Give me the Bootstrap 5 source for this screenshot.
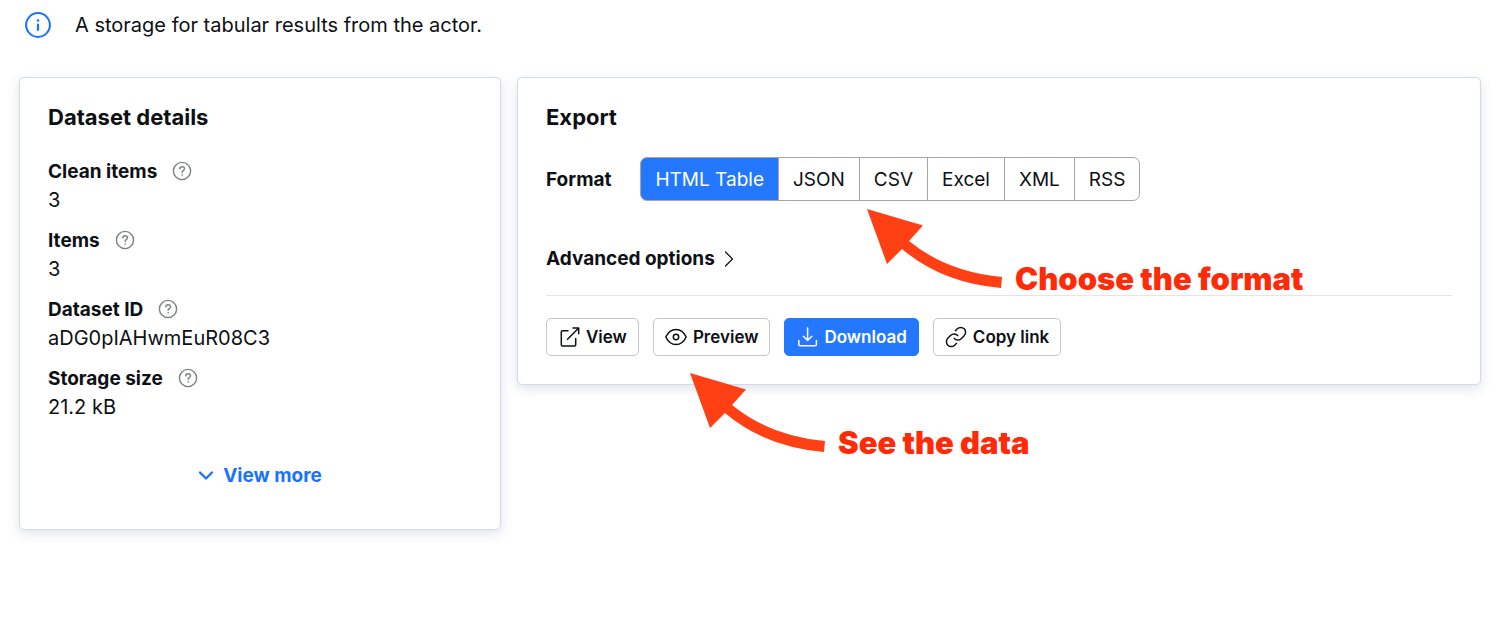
<!DOCTYPE html>
<html lang="en">
<head>
<meta charset="utf-8">
<meta name="viewport" content="width=device-width, initial-scale=1">
<title>Dataset storage</title>
<link href="https://cdn.jsdelivr.net/npm/bootstrap@5.3.0/dist/css/bootstrap.min.css" rel="stylesheet">
<style>
  body { font-family: Inter, "Liberation Sans", sans-serif; font-size: 19px; line-height: 28px; color: #0d1014; background: #fff; }
  svg { flex: none; fill: none; stroke: currentColor; stroke-linecap: round; stroke-linejoin: round; }
  .page { padding: 11px 19px 32px; }
  .intro { gap: 24px; padding-left: 6px; margin-bottom: 38px; }
  .intro svg { color: #1672ff; }
  .intro span, .details dd { font-size: 20px; }
  .panels { display: grid; grid-template-columns: 1fr 2fr; gap: 16px; align-items: start; }
  .panel { border: 1px solid #d0dbe7; border-radius: 5px; padding: 26px 28px 28px; box-shadow: 0 4px 12px rgba(60, 90, 130, .16); --bs-card-bg: #fff; color: inherit; }
  .panel h2 { font-size: 22px; line-height: 26px; font-weight: 700; margin-bottom: 27px; }
  .details { display: grid; gap: 13px; margin: 1px 0 41px; }
  .details dt { font-weight: 700; gap: 15px; }
  .details svg { color: #7d8085; margin-bottom: 3px; }
  .more { color: #1672ff; font-size: 19px; line-height: 28px; font-weight: 650; gap: 9px; margin-bottom: 11px; }
  .format { gap: 29px; margin-bottom: 44px; }
  .format .title, .advanced { font-weight: 700; }
  .format .title { padding-top: 2px; }
  .choices .btn { font-size: 19px; line-height: 28px; padding: 8px 14px 6px; border: 1px solid #a6a6a6; border-radius: 7px; color: #0d1014; background: #fff; }
  .choices .btn-check:checked + .btn { background: #2378ff; color: #fff; border-color: #a6a6a6; }
  .advanced { font-size: 19px; line-height: 28px; gap: 9px; color: inherit; }
  .rule { margin: 22px 0; border-top: 1px solid #e3e5e8; opacity: 1; }
  .actions { gap: 14px; }
  .actions .btn { font-size: 17px; line-height: 24px; font-weight: 600; padding: 6px 11px; gap: 6px; border: 1px solid #c6c6c6; border-radius: 5px; color: #0d1014; background: #fff; }
  .actions .btn.main { background: #2378ff; border-color: #2378ff; color: #fff; }
  .note { position: absolute; color: #ff2a08; font-size: 31px; line-height: 40px; font-weight: 900; white-space: nowrap; gap: 12px; }
  .note svg { fill: #ff4015; stroke: none; }
  .note span { padding-top: 50px; }
  .note-format { left: 349px; top: 131px; }
  .note-data { left: 172px; top: 295px; }
</style>
</head>
<body>
<svg width="0" height="0" class="position-absolute" aria-hidden="true">
  <symbol id="help" viewBox="0 0 20 20">
    <circle cx="10" cy="10" r="8.600" stroke-width="1.400"/>
    <path d="M7.700 7.800c.2-1.300 1.100-2.100 2.400-2.100 1.400 0 2.400.9 2.400 2.100 0 1.900-2.400 1.800-2.400 3.600" stroke-width="1.400"/>
    <circle cx="10.100" cy="13.900" r=".8" fill="currentColor" stroke="none"/>
  </symbol>
  <symbol id="arrow" viewBox="0 0 136 80">
    <path d="M0 0 56 16.500 42 32Q80 63 135 68L134 79Q75 74 35 40L20 55Z"/>
  </symbol>
</svg>
<main class="page">
  <div class="intro d-flex align-items-center">
    <svg width="26" height="28" viewBox="0 0 26 28" aria-hidden="true"><circle cx="13" cy="14" r="11.900" stroke-width="2"/><path d="M13 13.700v5.200" stroke-width="2.200"/><circle cx="13" cy="9.600" r="1.250" fill="currentColor" stroke="none"/></svg>
    <span>A storage for tabular results from the actor.</span>
  </div>
  <div class="panels">
    <section class="panel card">
      <h2>Dataset details</h2>
      <dl class="details">
        <div><dt class="d-flex align-items-center">Clean items <svg width="20" height="20"><use href="#help"/></svg></dt><dd class="mb-0">3</dd></div>
        <div><dt class="d-flex align-items-center">Items <svg width="20" height="20"><use href="#help"/></svg></dt><dd class="mb-0">3</dd></div>
        <div><dt class="d-flex align-items-center">Dataset ID <svg width="20" height="20"><use href="#help"/></svg></dt><dd class="mb-0">aDG0pIAHwmEuR08C3</dd></div>
        <div><dt class="d-flex align-items-center">Storage size <svg width="20" height="20"><use href="#help"/></svg></dt><dd class="mb-0">21.2 kB</dd></div>
      </dl>
      <button type="button" class="more btn border-0 p-0 d-flex align-items-center align-self-center">
        <svg width="16" height="16" viewBox="0 0 16 16" aria-hidden="true"><path d="M2 4.500 8 10.500 14 4.500" stroke-width="2.300"/></svg>View more
      </button>
    </section>
    <section class="panel card">
      <h2>Export</h2>
      <div class="format d-flex align-items-center">
        <span class="title" id="format-title">Format</span>
        <div class="choices btn-group" role="group" aria-labelledby="format-title">
          <input class="btn-check" type="radio" name="format" id="f-html" checked><label class="btn" for="f-html">HTML Table</label>
          <input class="btn-check" type="radio" name="format" id="f-json"><label class="btn" for="f-json">JSON</label>
          <input class="btn-check" type="radio" name="format" id="f-csv"><label class="btn" for="f-csv">CSV</label>
          <input class="btn-check" type="radio" name="format" id="f-excel"><label class="btn" for="f-excel">Excel</label>
          <input class="btn-check" type="radio" name="format" id="f-xml"><label class="btn" for="f-xml">XML</label>
          <input class="btn-check" type="radio" name="format" id="f-rss"><label class="btn" for="f-rss">RSS</label>
        </div>
      </div>
      <button type="button" class="advanced btn border-0 p-0 d-flex align-items-center align-self-start">Advanced options
        <svg width="10" height="16" viewBox="0 0 10 16" aria-hidden="true"><path d="M1.500 1 8.500 8 1.500 15" stroke-width="1.200"/></svg>
      </button>
      <hr class="rule">
      <div class="actions d-flex flex-wrap">
        <button type="button" class="btn d-flex align-items-center">
          <svg width="22" height="22" viewBox="0 0 22 22" stroke-width="1.500" aria-hidden="true"><path d="M10 4.800H4.500Q3.300 4.800 3.300 6v12.800q0 1.200 1.200 1.200h12q1.200 0 1.200-1.200v-6.300M9.500 13.200 20.500 2.200M15 2h5.700v5.700"/></svg>View
        </button>
        <button type="button" class="btn d-flex align-items-center">
          <svg width="22" height="22" viewBox="0 0 22 22" stroke-width="1.500" aria-hidden="true"><path d="M.8 11C3 6.300 6.500 3.500 11 3.500S19 6.300 21.200 11C19 15.700 15.500 18.500 11 18.500S3 15.700.8 11Z"/><circle cx="11" cy="11" r="2.700"/></svg>Preview
        </button>
        <button type="button" class="main btn d-flex align-items-center">
          <svg width="22" height="22" viewBox="0 0 22 22" stroke-width="1.500" aria-hidden="true"><path d="M2.800 14.500v4q0 1.300 1.300 1.300h15q1.300 0 1.300-1.300v-4M11.600 2v12.500M7.400 10.300l4.200 4.200 4.200-4.200"/></svg>Download
        </button>
        <button type="button" class="btn d-flex align-items-center">
          <svg width="22" height="22" viewBox="0 0 24 24" stroke-width="1.600" aria-hidden="true"><path d="M10 13.500a5.300 5.300 0 0 0 7.700.3l3.200-3.200a5.300 5.300 0 0 0-7.500-7.500l-2 2M14 10.500a5.300 5.300 0 0 0-7.700-.3l-3.200 3.200a5.300 5.300 0 0 0 7.500 7.500l2-2"/></svg>Copy link
        </button>
      </div>
      <div class="note note-format d-flex"><svg width="136" height="80" aria-hidden="true"><use href="#arrow"/></svg><span>Choose the format</span></div>
      <div class="note note-data d-flex"><svg width="136" height="80" aria-hidden="true"><use href="#arrow"/></svg><span>See the data</span></div>
    </section>
  </div>
</main>
<script src="https://cdn.jsdelivr.net/npm/bootstrap@5.3.0/dist/js/bootstrap.bundle.min.js"></script>
</body>
</html>
